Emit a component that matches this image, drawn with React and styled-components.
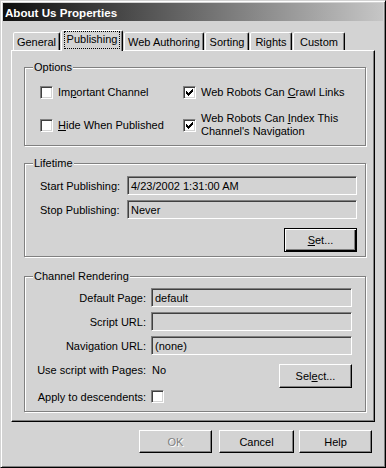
import React from "react";
import styled, { createGlobalStyle } from "styled-components";

const face = "#d3d3d3";

const GlobalStyle = createGlobalStyle`
  body {
    margin: 0;
    background: ${face};
    font-family: "Liberation Sans", Arial, sans-serif;
    font-size: 11px;
    color: #000;
  }
  * { box-sizing: border-box; }
`;

const Window = styled.div`
  width: 386px;
  height: 468px;
  background: ${face};
  border: 1px solid;
  border-color: ${face} #000 #000 ${face};
  box-shadow: inset 1px 1px #fff, inset -1px -1px #808080;
  padding: 2px;
  display: flex;
  flex-direction: column;
`;

const TitleBar = styled.div`
  height: 18px;
  display: flex;
  align-items: center;
  padding-left: 2px;
  background: linear-gradient(to right, #0e0e0e, #c6c6c6);
  color: #fff;
  font-weight: bold;
  font-size: 11.6px;
`;

const Body = styled.div`
  padding: 9px 8px 0 8px;
  display: flex;
  flex-direction: column;
`;

const TabStrip = styled.div`
  height: 20px;
  display: flex;
  align-items: flex-end;
  padding-left: 2px;
`;

const Tab = styled.div`
  position: relative;
  z-index: ${p => (p.$active ? 2 : 0)};
  width: ${p => p.$w}px;
  height: ${p => (p.$active ? 21 : 18)}px;
  margin-left: ${p => p.$ml ?? 1}px;
  margin-bottom: ${p => (p.$active ? -1 : 0)}px;
  background: ${face};
  border: 1px solid;
  border-bottom: none;
  border-color: #fff #000 transparent #fff;
  border-radius: 2px 2px 0 0;
  box-shadow: inset -1px 0 #808080;
  display: flex;
  align-items: ${p => (p.$active ? "flex-start" : "center")};
  justify-content: center;
  padding-top: ${p => (p.$active ? 1 : 0)}px;
`;

const FocusText = styled.span`
  outline: 1px dotted #000;
  padding: 1px 2px 2px 2px;
  line-height: 13px;
`;

const Panel = styled.div`
  position: relative;
  z-index: 1;
  width: 364px;
  height: 372px;
  border: 1px solid;
  border-color: #fff #000 #000 #fff;
  box-shadow: inset -1px -1px #808080;
  padding: 16px 7px 0 12px;
  display: flex;
  flex-direction: column;
`;

const Group = styled.div`
  position: relative;
  height: ${p => p.$h}px;
  margin-top: ${p => p.$mt || 0}px;
  border: 1px solid #808080;
  box-shadow: inset 1px 1px #fff, 1px 1px #fff;
  margin-right: 1px;
`;

const GroupLabel = styled.span`
  position: absolute;
  top: -7px;
  left: 8px;
  padding: 0 1px;
  line-height: 13px;
  background: ${face};
`;

const OptionsGrid = styled.div`
  display: grid;
  grid-template-columns: 143px 1fr;
  grid-auto-rows: 26px;
  row-gap: 7px;
  padding: 11px 0 0 15px;
`;

const CheckItem = styled.label`
  display: flex;
  align-items: center;
  gap: 5px;
  line-height: 13px;
`;

const Box = styled.span`
  width: 13px;
  height: 13px;
  flex: none;
  background: #fff;
  border: 1px solid;
  border-color: #808080 #fff #fff #808080;
  box-shadow: inset 1px 1px #404040, inset -1px -1px ${face};
  display: flex;
  align-items: center;
  justify-content: center;
`;

const LifetimeGrid = styled.div`
  display: grid;
  grid-template-columns: 87px 1fr;
  grid-template-rows: 19px 19px 24px;
  row-gap: 5px;
  padding: 12px 8px 0 15px;
  & > :nth-child(5) {
    margin-top: 4px;
  }
`;

const RenderGrid = styled.div`
  display: grid;
  grid-template-columns: 121px 123px 73px;
  grid-template-rows: 19px 19px 19px 25px 13px;
  column-gap: 5px;
  row-gap: 5px;
  padding: 11px 0 0 0;
`;

const FieldLabel = styled.span`
  align-self: ${p => p.$align || "center"};
  justify-self: ${p => (p.$right ? "end" : "start")};
  margin-top: ${p => p.$mt || 0}px;
  line-height: 14px;
  white-space: nowrap;
`;

const Field = styled.div`
  grid-column: ${p => p.$span || "auto"};
  height: 19px;
  border: 1px solid;
  border-color: #808080 #fff #fff #808080;
  box-shadow: inset 1px 1px #404040, inset -1px -1px ${face};
  background: ${face};
  padding: 0 3px;
  display: flex;
  align-items: center;
  white-space: nowrap;
`;

const Value = styled.span`
  align-self: start;
  margin-top: 3px;
  padding-left: 1px;
  line-height: 14px;
`;

const Button = styled.button`
  width: ${p => p.$w || 73}px;
  height: ${p => p.$h || 23}px;
  padding: 0;
  font: inherit;
  color: ${p => (p.disabled ? "#808080" : "#000")};
  text-shadow: ${p => (p.disabled ? "1px 1px #fff" : "none")};
  background: ${face};
  border: 1px solid;
  border-color: ${p => (p.$default ? "#000" : "#fff #000 #000 #fff")};
  box-shadow: ${p =>
    p.$default
      ? "inset 1px 1px #fff, inset -1px -1px #000, inset -2px -2px #808080"
      : `inset -1px -1px #808080, inset 1px 1px ${face}`};
  justify-self: ${p => p.$justify || "auto"};
  align-self: ${p => p.$self || "auto"};
  margin-top: ${p => p.$mt || 0}px;
  grid-row: ${p => p.$row || "auto"};
  grid-column: ${p => p.$col || "auto"};
`;

const ButtonRow = styled.div`
  display: flex;
  justify-content: flex-end;
  margin-top: 8px;
  padding-right: 3px;
  gap: 7px;
  & > :last-child {
    margin-left: -2px;
  }
`;

function Check({ checked }) {
  return (
    <Box>
      {checked && (
        <svg width="7" height="7" viewBox="0 0 7 7" shapeRendering="crispEdges">
          <path
            d="M6 0h1v1h-1z M5 1h2v1h-2z M0 2h1v1h-1z M4 2h3v1h-3z M0 3h2v1h-2z M3 3h3v1h-3z M0 4h5v1h-5z M1 5h3v1h-3z M2 6h1v1h-1z"
            fill="#000"
          />
        </svg>
      )}
    </Box>
  );
}

const tabs = [
  { label: "General", w: 47, ml: 0 },
  { label: "Publishing", w: 62, active: true },
  { label: "Web Authoring", w: 80 },
  { label: "Sorting", w: 44 },
  { label: "Rights", w: 42 },
  { label: "Custom", w: 52 },
];

export default function App() {
  return (
    <>
      <GlobalStyle />
      <Window>
        <TitleBar>About Us Properties</TitleBar>
        <Body>
          <TabStrip>
            {tabs.map(t => (
              <Tab key={t.label} $w={t.w} $ml={t.ml} $active={t.active}>
                {t.active ? <FocusText>{t.label}</FocusText> : t.label}
              </Tab>
            ))}
          </TabStrip>
          <Panel>
            <Group $h={79}>
              <GroupLabel>Options</GroupLabel>
              <OptionsGrid>
                <CheckItem>
                  <Check />
                  <span>Im<u>p</u>ortant Channel</span>
                </CheckItem>
                <CheckItem>
                  <Check checked />
                  <span>Web Robots Can <u>C</u>rawl Links</span>
                </CheckItem>
                <CheckItem>
                  <Check />
                  <span><u>H</u>ide When Published</span>
                </CheckItem>
                <CheckItem>
                  <Check checked />
                  <span>
                    Web Robots Can <u>I</u>ndex This
                    <br />
                    Channel's Navigation
                  </span>
                </CheckItem>
              </OptionsGrid>
            </Group>

            <Group $h={94} $mt={17}>
              <GroupLabel>Lifetime</GroupLabel>
              <LifetimeGrid>
                <FieldLabel>Start Publishing:</FieldLabel>
                <Field>4/23/2002 1:31:00 AM</Field>
                <FieldLabel>Stop Publishing:</FieldLabel>
                <Field>Never</Field>
                <Button $default $h={24} $col="2" $justify="end">
                  <u>S</u>et...
                </Button>
              </LifetimeGrid>
            </Group>

            <Group $h={136} $mt={19}>
              <GroupLabel>Channel Rendering</GroupLabel>
              <RenderGrid>
                <FieldLabel $right>Default Page:</FieldLabel>
                <Field $span="2 / 4">default</Field>
                <FieldLabel $right>Script URL:</FieldLabel>
                <Field $span="2 / 4" />
                <FieldLabel $right>Navigation URL:</FieldLabel>
                <Field $span="2 / 4">(none)</Field>
                <FieldLabel $right $align="start" $mt={3}>
                  Use script with Pages:
                </FieldLabel>
                <Value>No</Value>
                <Button $h={24} $row="4 / 6" $col="3" $self="start" $mt={4}>
                  Sel<u>e</u>ct...
                </Button>
                <FieldLabel $right>Apply to descendents:</FieldLabel>
                <Check />
              </RenderGrid>
            </Group>
          </Panel>
          <ButtonRow>
            <Button disabled $w={73}>OK</Button>
            <Button $w={75}>Cancel</Button>
            <Button $w={73}>Help</Button>
          </ButtonRow>
        </Body>
      </Window>
    </>
  );
}
